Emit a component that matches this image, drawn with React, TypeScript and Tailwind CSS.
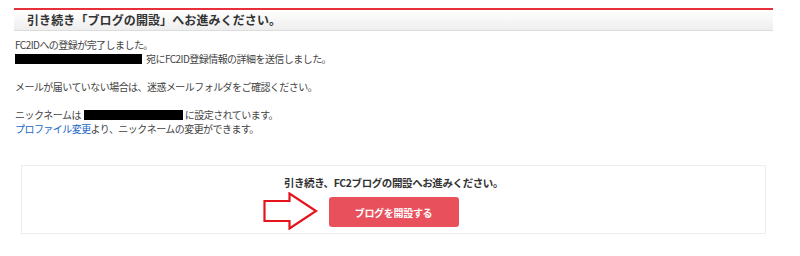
import React from 'react';

const font = { fontFamily: '"Noto Sans CJK JP", "Noto Sans", sans-serif' };

const Redacted: React.FC<{ w: string }> = ({ w }) => (
  <span className={`inline-block ${w} h-[10px] bg-black align-[-1px]`} />
);

const App: React.FC = () => {
  return (
    <div className="w-[800px] h-[256px] bg-white text-[#333]" style={font}>
      <div className="ml-[14px] w-[759px] pt-[8px]">
        <div className="h-[2px] bg-[#e8303a]" />
        <div className="h-[21px] flex items-center pl-[13px] bg-gradient-to-b from-white to-[#eeeeee] border-b border-[#dcdcdc]">
          <h2 className="text-[12px] font-bold leading-none tracking-[0.1px] text-[#333]">
            引き続き「ブログの開設」へお進みください。
          </h2>
        </div>

        <div className="pt-[7px] pl-[1px] text-[10px] leading-[14px] tracking-[-0.55px] text-[#444]">
          <p>FC2IDへの登録が完了しました。</p>
          <p className="flex items-center">
            <Redacted w="w-[127px]" />
            <span className="ml-[4px]">宛にFC2ID登録情報の詳細を送信しました。</span>
          </p>
          <p className="h-[14px]" />
          <p>メールが届いていない場合は、迷惑メールフォルダをご確認ください。</p>
          <p className="h-[14px]" />
          <p className="flex items-center">
            <span>ニックネームは</span>
            <span className="ml-[3px]"><Redacted w="w-[99px]" /></span>
            <span className="ml-[2px]">に設定されています。</span>
          </p>
          <p>
            <a href="#" className="text-[#1a66c4]">プロファイル変更</a>より、ニックネームの変更ができます。
          </p>
        </div>

        <div className="relative mt-[29px] ml-[7px] w-[745px] h-[69px] border border-[#ededed] flex flex-col items-center">
          <p className="mt-[10px] text-[10.5px] font-bold leading-[14px] tracking-[-0.4px] text-[#333]">
            引き続き、FC2ブログの開設へお進みください。
          </p>
          <button className="mt-[7px] w-[130px] h-[30px] rounded-[3px] bg-[#e8505c] text-white text-[10px] font-bold tracking-[-0.3px]">
            ブログを開設する
          </button>
          <svg
            className="absolute left-[241px] top-[26px]"
            width="56"
            height="38"
            viewBox="0 0 56 38"
          >
            <polygon
              points="1.5,9 26.5,9 26.5,1.5 53,19 26.5,36.5 26.5,29 1.5,29"
              fill="white"
              stroke="#e5141c"
              strokeWidth="2.2"
              strokeLinejoin="miter"
            />
          </svg>
        </div>
      </div>
    </div>
  );
};

export default App;
